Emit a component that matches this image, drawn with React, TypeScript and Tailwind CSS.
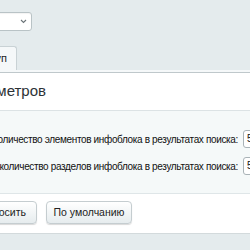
import React from "react";

export default function App() {
  return (
    <div
      className="w-[250px] h-[250px] overflow-hidden bg-[#e4ebed] flex flex-col"
      style={{ fontFamily: '"Liberation Sans", Arial, sans-serif' }}
    >
      {/* select */}
      <div className="mt-[12px] h-[19px] flex">
        <div className="w-[32px] flex justify-end">
          <div className="shrink-0 w-[140px] h-[19px] bg-white border border-[#b9c3c6] rounded-[3px] flex items-center justify-end pr-[4px] shadow-[inset_0_1px_1px_rgba(0,0,0,0.05)]">
            <svg width="7" height="5" viewBox="0 0 7 5">
              <path d="M1 1 L3.5 3.5 L6 1" fill="none" stroke="#6b7478" strokeWidth="1.1" />
            </svg>
          </div>
        </div>
      </div>

      {/* tabs */}
      <div className="mt-[15px] h-[24px] flex">
        <div className="w-[17px] flex justify-end">
          <div className="shrink-0 h-[24px] pl-[10px] pr-[9px] bg-[#f5f8f9] border border-b-0 border-[#c9d2d5] rounded-t-[3px] flex items-center text-[11px] text-[#222]">
            Доступ
          </div>
        </div>
      </div>
      <div className="h-[2px] bg-[#f5f8f9]" />

      {/* panel */}
      <div className="bg-white border-t border-[#bfc8cb] flex flex-col">
        <div className="h-[38px] flex items-center border-b border-[#dce3e5]">
          <div className="w-[46px] flex justify-end whitespace-nowrap">
            <span className="text-[15px] text-[#2c3236] shrink-0">Настройка параметров</span>
          </div>
        </div>
        <div className="bg-[#f5f9f9] h-[83px] flex flex-col pt-[19px] gap-[9px] border-b border-[#dfe6e8]">
          <div className="flex items-center h-[18px]">
            <div className="w-[238px] flex justify-end whitespace-nowrap">
              <span className="shrink-0 text-[10px] tracking-[-0.35px] text-[#111]">
                Максимальное количество элементов инфоблока в результатах поиска:
              </span>
            </div>
            <div className="ml-[5px] shrink-0 w-[40px] h-[18px] bg-white border border-[#a9b3b7] rounded-[3px] text-[10px] text-[#111] pl-[3px] leading-[16px]">
              5
            </div>
          </div>
          <div className="flex items-center h-[18px]">
            <div className="w-[238px] flex justify-end whitespace-nowrap">
              <span className="shrink-0 text-[10px] tracking-[-0.35px] text-[#111]">
                Максимальное количество разделов инфоблока в результатах поиска:
              </span>
            </div>
            <div className="ml-[5px] shrink-0 w-[40px] h-[18px] bg-white border border-[#a9b3b7] rounded-[3px] text-[10px] text-[#111] pl-[3px] leading-[16px]">
              5
            </div>
          </div>
        </div>
        <div className="h-[40px] flex items-start pt-[7px] border-b border-[#d3dadc]">
          <div className="w-[37px] flex justify-end">
            <div className="shrink-0 h-[23px] pl-[9px] pr-[10px] rounded-[4px] border border-[#c5cdd0] bg-gradient-to-b from-white to-[#e6ecee] shadow-[0_1px_1px_rgba(0,0,0,0.15)] flex items-center text-[10.5px] text-[#222] whitespace-nowrap">
              Сбросить
            </div>
          </div>
          <div className="ml-[9px] h-[23px] w-[86px] rounded-[4px] border border-[#c5cdd0] bg-gradient-to-b from-white to-[#e6ecee] shadow-[0_1px_1px_rgba(0,0,0,0.15)] flex items-center justify-center text-[10.5px] text-[#222] whitespace-nowrap">
            По умолчанию
          </div>
        </div>
      </div>
    </div>
  );
}
